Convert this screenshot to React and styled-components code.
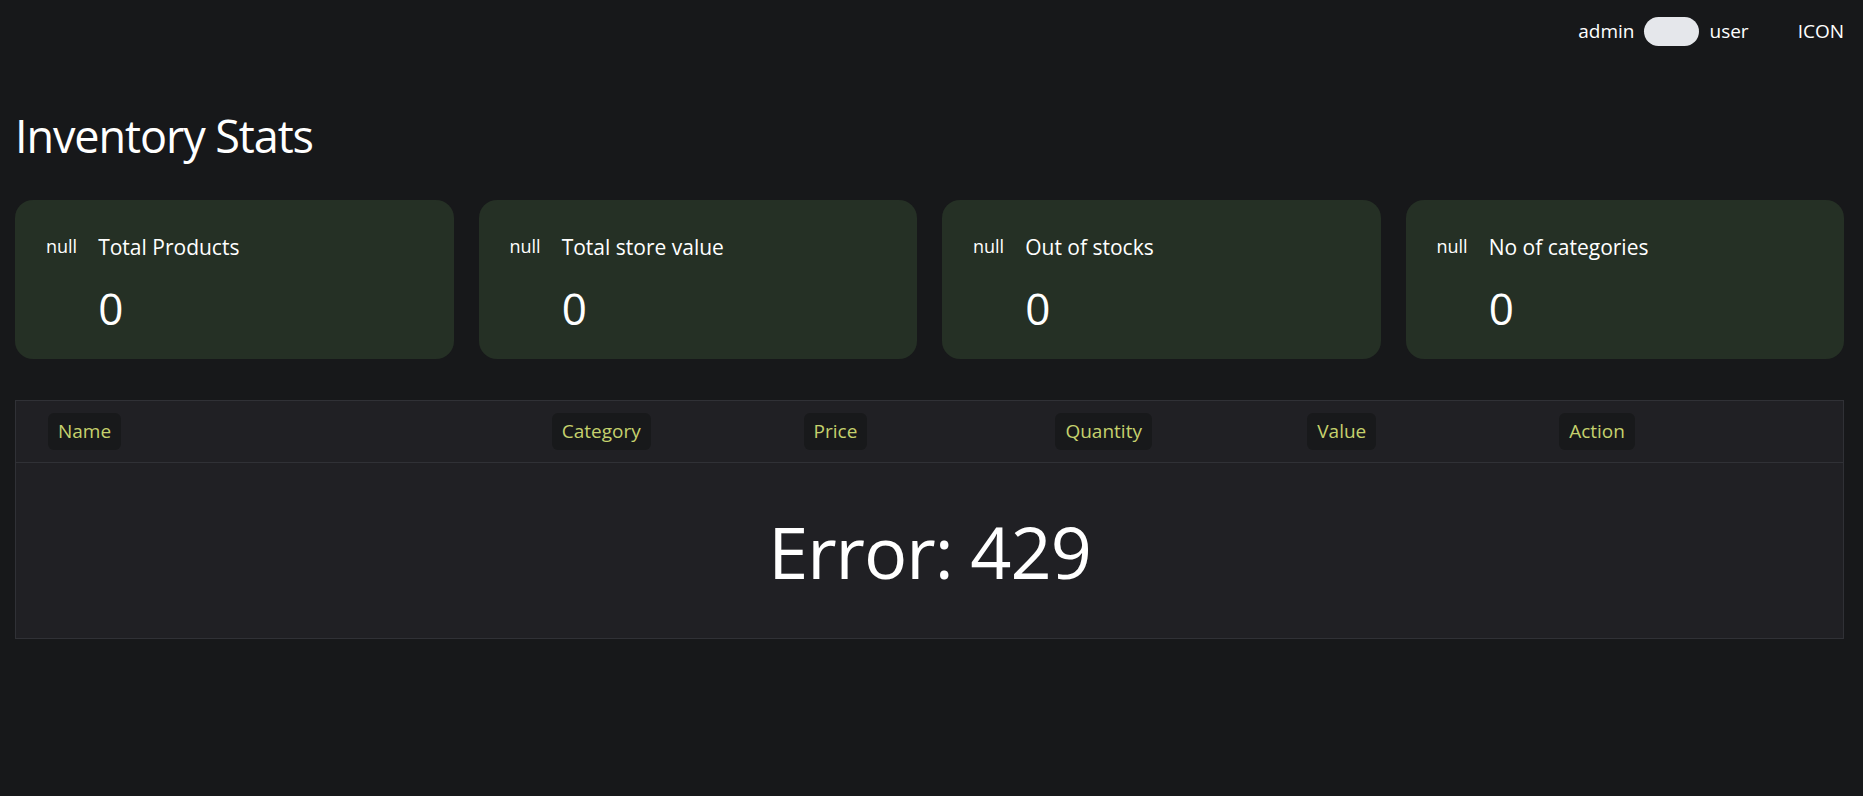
import React from 'react';
import styled, { createGlobalStyle } from 'styled-components';

const stats = [
  { title: 'Total Products', value: 0 },
  { title: 'Total store value', value: 0 },
  { title: 'Out of stocks', value: 0 },
  { title: 'No of categories', value: 0 },
];

const columns = ['Name', 'Category', 'Price', 'Quantity', 'Value', 'Action'];

const GlobalStyle = createGlobalStyle`
  html, body {
    margin: 0;
    padding: 0;
    background: #17181a;
    color: #ffffff;
    font-family: 'Open Sans', 'Noto Sans', sans-serif;
  }
`;

const Page = styled.div`
  min-height: 796px;
  padding: 0 19px 0 15px;
  box-sizing: border-box;
`;

const Header = styled.header`
  display: flex;
  align-items: center;
  justify-content: flex-end;
  height: 62px;
`;

const RoleSwitch = styled.div`
  display: flex;
  align-items: center;
  gap: 10px;
  margin-right: 49px;
`;

const HeaderText = styled.span`
  font-size: 19px;
  color: #ffffff;
`;

const Toggle = styled.div`
  width: 55px;
  height: 29px;
  border-radius: 15px;
  background: #e5e7eb;
`;

const Title = styled.h1`
  margin: 44px 0 34px;
  font-size: 45px;
  line-height: 60px;
  font-weight: 400;
  letter-spacing: -1.1px;
`;

const Cards = styled.div`
  display: grid;
  grid-template-columns: repeat(4, 1fr);
  gap: 25px;
`;

const Card = styled.div`
  display: flex;
  align-items: flex-start;
  gap: 21px;
  padding: 32px 31px 25px;
  border-radius: 18px;
  background: #253025;
`;

const CardIcon = styled.span`
  font-size: 18px;
  line-height: 28px;
`;

const CardBody = styled.div`
  display: flex;
  flex-direction: column;
  gap: 20px;
`;

const CardTitle = styled.span`
  font-size: 21px;
  line-height: 30px;
`;

const CardValue = styled.span`
  font-size: 44px;
  line-height: 52px;
`;

const Table = styled.div`
  margin-top: 41px;
  border: 1px solid #303136;
  background: #202024;
`;

const HeadRow = styled.div`
  display: grid;
  grid-template-columns: 2fr repeat(5, 1fr);
  align-items: center;
  padding: 12px 32px;
  border-bottom: 1px solid #303136;
`;

const HeadCell = styled.div`
  justify-self: start;
  padding: 0 10px;
  border-radius: 6px;
  background: #18191b;
  color: #c5d16d;
  font-size: 19px;
  line-height: 37px;
`;

const Body = styled.div`
  display: flex;
  align-items: center;
  justify-content: center;
  height: 175px;
`;

const ErrorText = styled.h2`
  margin: 0;
  font-size: 72px;
  font-weight: 400;
  letter-spacing: -1px;
`;

export default function App() {
  return (
    <>
      <GlobalStyle />
      <Page>
        <Header>
          <RoleSwitch>
            <HeaderText>admin</HeaderText>
            <Toggle />
            <HeaderText>user</HeaderText>
          </RoleSwitch>
          <HeaderText>ICON</HeaderText>
        </Header>

        <Title>Inventory Stats</Title>

        <Cards>
          {stats.map(({ title, value }) => (
            <Card key={title}>
              <CardIcon>null</CardIcon>
              <CardBody>
                <CardTitle>{title}</CardTitle>
                <CardValue>{value}</CardValue>
              </CardBody>
            </Card>
          ))}
        </Cards>

        <Table>
          <HeadRow>
            {columns.map(col => (
              <HeadCell key={col}>{col}</HeadCell>
            ))}
          </HeadRow>
          <Body>
            <ErrorText>Error: 429</ErrorText>
          </Body>
        </Table>
      </Page>
    </>
  );
}
